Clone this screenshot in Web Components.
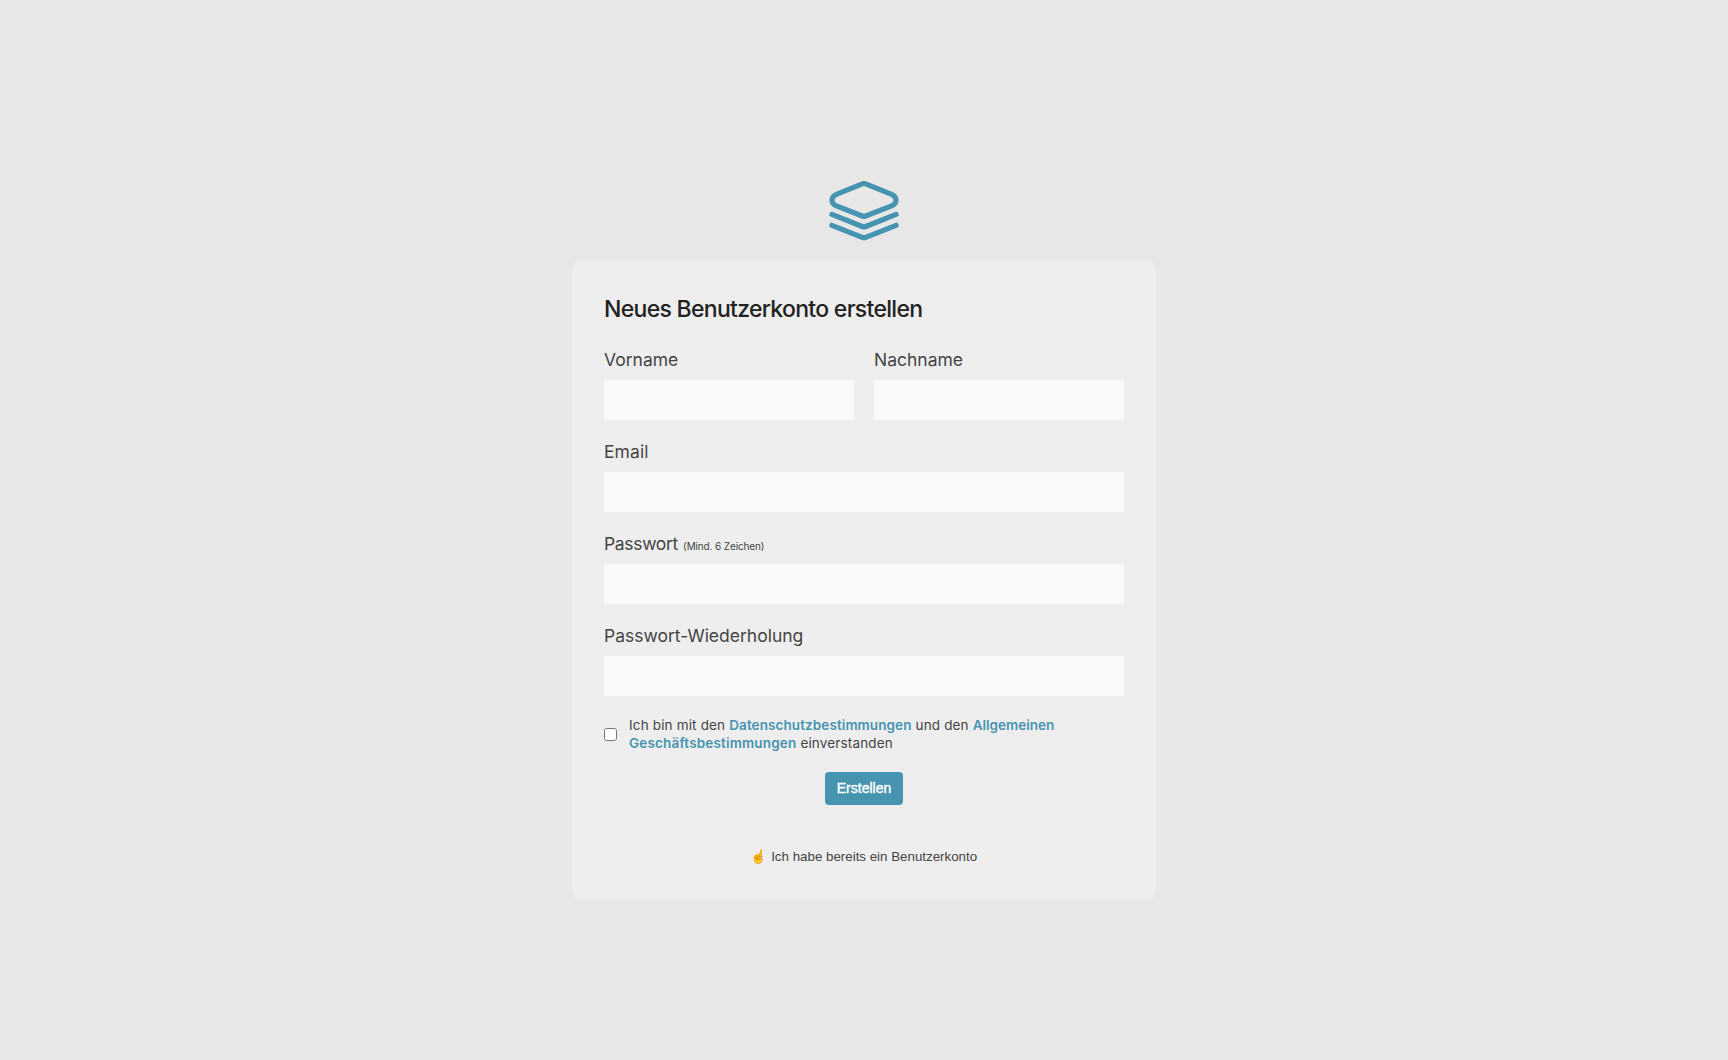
<!DOCTYPE html>
<html lang="de">
<head>
<meta charset="utf-8">
<title>Neues Benutzerkonto erstellen</title>
<style>
html,body{margin:0;height:100%}
body{background:#e7e7e7;color:#444;font-family:Inter,"Liberation Sans",sans-serif}
</style>
</head>
<body>
<register-page></register-page>
<script>
const define = (name, html) => {
  const tpl = document.createElement('template');
  tpl.innerHTML = html;
  customElements.define(name, class extends HTMLElement {
    constructor() {
      super();
      this.attachShadow({ mode: 'open' }).append(tpl.content.cloneNode(true));
    }
  });
};

define('app-logo', `
<style>:host{display:block;width:70px;height:60px}svg{display:block}</style>
<svg width="70" height="60" viewBox="0 0 70 60" fill="none" stroke="#4694b0" stroke-width="5.2" stroke-linecap="round" stroke-linejoin="round">
<path d="M33.3 2.9Q35 2.2 36.7 2.9L62 13.1Q67 15.300 67 19.200Q67 23.100 62 25.200L36.700 35Q35 35.700 33.300 35L8 25.200Q3 23.100 3 19.200Q3 15.300 8 13.100Z"/>
<path d="M2.900 33.400L33.300 45.500Q35 46.200 36.700 45.500L67.100 33.400"/>
<path d="M2.900 44.300L33.300 56.300Q35 57 36.700 56.300L67.100 44.300"/>
</svg>`);

define('form-card', `
<style>:host{display:flex;flex-direction:column;box-sizing:border-box;width:584px;height:638px;padding:32px;border-radius:8px;background:#eee}
h1{margin:0 0 23px;font-weight:500;font-size:23px;line-height:32px;letter-spacing:-.7px;color:#222}</style>
<h1><slot name="title"></slot></h1><slot></slot>`);

define('form-row', `<style>:host{display:flex;gap:20px}</style><slot></slot>`);

define('form-field', `
<style>:host{display:block;flex:1;margin-bottom:20px;letter-spacing:var(--track,0)}
label{display:block;height:24px;font-size:17.5px;line-height:24px;margin-bottom:8px;white-space:nowrap}
input{display:block;box-sizing:border-box;width:100%;height:40px;border:0;padding:0 10px;background:#f9f9f9;outline:0}
::slotted(small){font-size:10px;line-height:1;letter-spacing:-.13px;margin-left:.6px}</style>
<label><slot></slot></label><input>`);

define('terms-check', `
<style>:host{display:flex;align-items:center;gap:12px;height:36px}
input{margin:0;width:13px;height:13px;flex:none}
div{font-size:13.5px;line-height:18px;letter-spacing:.16px}
::slotted(a){color:#4694b0;font-weight:600;letter-spacing:var(--track,.09px)}</style>
<input type="checkbox"><div><slot></slot></div>`);

define('primary-button', `
<style>:host{display:flex;justify-content:center;margin-top:20px}
button{width:78px;height:33px;padding:0;border:0;border-radius:4px;background:#4694b0;color:#fff;font:14px/33px "Liberation Sans",sans-serif;-webkit-text-stroke:.4px #fff}</style>
<button><slot></slot></button>`);

define('text-link', `
<style>:host{display:flex;justify-content:center;margin-top:43px;font:13.333px/18px "Liberation Sans","Noto Color Emoji",sans-serif;white-space:pre}</style>
<slot></slot>`);

define('register-page', `
<style>:host{display:flex;flex-direction:column;align-items:center;box-sizing:border-box;height:1060px;padding-top:181px;gap:20px}</style>
<app-logo></app-logo>
<form-card>
<span slot="title">Neues Benutzerkonto erstellen</span>
<form-row><form-field>Vorname</form-field><form-field>Nachname</form-field></form-row>
<form-field style="flex:none;--track:.1px">Email</form-field>
<form-field style="flex:none;--track:-.33px">Passwort <small>(Mind. 6 Zeichen)</small></form-field>
<form-field style="flex:none">Passwort-Wiederholung</form-field>
<terms-check>Ich bin mit den <a>Datenschutzbestimmungen</a> und den <a style="--track:0px">Allgemeinen</a><br><a style="--track:.17px">Geschäftsbestimmungen</a> einverstanden</terms-check>
<primary-button>Erstellen</primary-button>
<text-link>☝️ Ich habe bereits ein Benutzerkonto</text-link>
</form-card>`);
</script>
</body>
</html>
